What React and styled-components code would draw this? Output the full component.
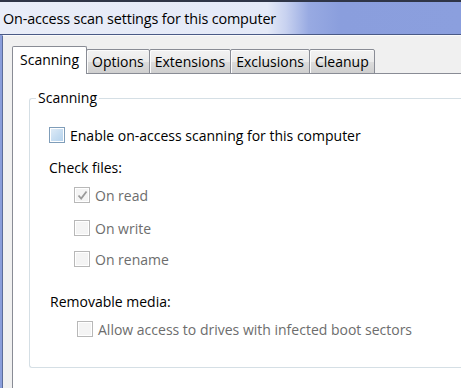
import React from "react";
import styled, { createGlobalStyle } from "styled-components";

const GlobalStyle = createGlobalStyle`
	html, body {
		margin: 0;
		padding: 0;
		width: 461px;
		height: 388px;
		overflow: hidden;
		background: #f0f0f0;
	}
	body {
		font-family: "Open Sans", "Noto Sans", Arial, sans-serif;
		font-size: 14px;
		color: #000;
	}
`;

const tabs = ["Scanning", "Options", "Extensions", "Exclusions", "Cleanup"];

const fileChecks = [
	{ label: "On read", checked: true, gap: 7 },
	{ label: "On write", gap: 13 },
	{ label: "On rename", gap: 11 },
];

const App = () => {
	return (
		<>
			<GlobalStyle />
			<Window>
				<TitleBar>On-access scan settings for this computer</TitleBar>
				<Body>
					<TabRow>
						{tabs.map((tab, i) => (
							<Tab key={tab} $active={i === 0}>
								{tab}
							</Tab>
						))}
					</TabRow>
					<Panel>
						<Group>
							<Legend>Scanning</Legend>
							<GroupBody>
								<Row $gap={17}>
									<Box $state="normal" />
									<span>Enable on-access scanning for this computer</span>
								</Row>
								<Heading $gap={13}>Check files:</Heading>
								{fileChecks.map((item) => (
									<Row key={item.label} $gap={item.gap} $indent={25} $disabled>
										<Box $state="disabled">
											{item.checked && (
												<svg width="11" height="11" viewBox="0 0 11 11">
													<path
														d="M1.5 5.5 L4.2 8.5 L9.5 1.5"
														fill="none"
														stroke="#9a9a9a"
														strokeWidth="1.8"
													/>
												</svg>
											)}
										</Box>
										<span>{item.label}</span>
									</Row>
								))}
								<Heading $gap={23} $indent={1}>
									Removable media:
								</Heading>
								<Row $gap={7} $indent={28} $disabled>
									<Box $state="disabled" />
									<span>Allow access to drives with infected boot sectors</span>
								</Row>
							</GroupBody>
						</Group>
					</Panel>
				</Body>
			</Window>
		</>
	);
};

const Window = styled.div`
	width: 461px;
	height: 388px;
	display: flex;
	flex-direction: column;
	background: #8a9edb;
	overflow: hidden;
`;

const TitleBar = styled.div`
	height: 32px;
	flex: none;
	display: flex;
	align-items: center;
	padding: 0 0 0 3px;
	border-top: 2px solid #2f3547;
	border-bottom: 1px solid #4a5a86;
	background: linear-gradient(
		to right,
		#e9edf8 0%,
		#e4e9f7 58%,
		#c8d2f0 62%,
		#98aae2 67%,
		#8a9edd 74%,
		#8b9fde 100%
	);
	font-size: 14.4px;
	letter-spacing: -0.15px;
	color: #000;
	white-space: nowrap;
`;

const Body = styled.div`
	flex: 1;
	display: flex;
	flex-direction: column;
	margin-left: 2px;
	border-left: 1px solid #5b6c9a;
	border-top: 1px solid #fbfbfb;
	background: #f0f0f0;
	padding: 10px 0 0 9px;
	min-height: 0;
`;

const TabRow = styled.div`
	display: flex;
	align-items: flex-end;
	height: 28px;
	position: relative;
	z-index: 1;
	margin-bottom: -1px;
`;

const Tab = styled.div`
	display: flex;
	align-items: center;
	justify-content: center;
	box-sizing: border-box;
	height: ${(p) => (p.$active ? "28px" : "25px")};
	padding: ${(p) => (p.$active ? "0 7px 3px" : "0 5px 1px")};
	margin-left: ${(p) => (p.$active ? "0" : "-1px")};
	border: 1px solid #898c95;
	border-bottom: ${(p) => (p.$active ? "none" : "1px solid #898c95")};
	border-radius: 2px 2px 0 0;
	background: ${(p) =>
		p.$active
			? "#ffffff"
			: "linear-gradient(to bottom, #f2f2f2 0%, #ebebeb 50%, #dddddd 51%, #cfcfcf 100%)"};
	box-shadow: ${(p) => (p.$active ? "none" : "inset 1px 1px 0 #fcfcfc")};
	font-size: 14px;
	white-space: nowrap;
	&:first-child {
		margin-left: 0;
	}
`;

const Panel = styled.div`
	flex: 1;
	background: #fff;
	border: 1px solid #898c95;
	border-right: none;
	border-bottom: none;
	padding: 14px 0 0 16px;
`;

const Group = styled.fieldset`
	margin: 0;
	padding: 0;
	height: 280px;
	box-sizing: border-box;
	border: 1px solid #d5dfe5;
	border-right: none;
	border-radius: 3px 0 0 3px;
`;

const Legend = styled.legend`
	margin-left: 6px;
	padding: 0 2px;
	line-height: 20px;
	font-size: 14px;
`;

const GroupBody = styled.div`
	display: flex;
	flex-direction: column;
	padding-left: 19px;
`;

const Row = styled.label`
	display: flex;
	align-items: center;
	gap: 5px;
	height: 20px;
	margin-top: ${(p) => p.$gap}px;
	margin-left: ${(p) => p.$indent || 0}px;
	color: ${(p) => (p.$disabled ? "#6d6d6d" : "#000")};
	white-space: nowrap;
`;

const Heading = styled.div`
	height: 20px;
	line-height: 20px;
	margin-top: ${(p) => p.$gap}px;
	margin-left: ${(p) => p.$indent || 0}px;
`;

const Box = styled.span`
	flex: none;
	box-sizing: border-box;
	width: 16px;
	height: 16px;
	display: flex;
	align-items: center;
	justify-content: center;
	border: 1px solid ${(p) => (p.$state === "disabled" ? "#b8b8b8" : "#7f9db9")};
	box-shadow: inset 0 0 0 1px #fff;
	background: ${(p) =>
		p.$state === "disabled"
			? "#f4f4f4"
			: "linear-gradient(135deg, #e2edf7 0%, #c8def2 50%, #b3d1ec 100%)"};
`;

export default App;
